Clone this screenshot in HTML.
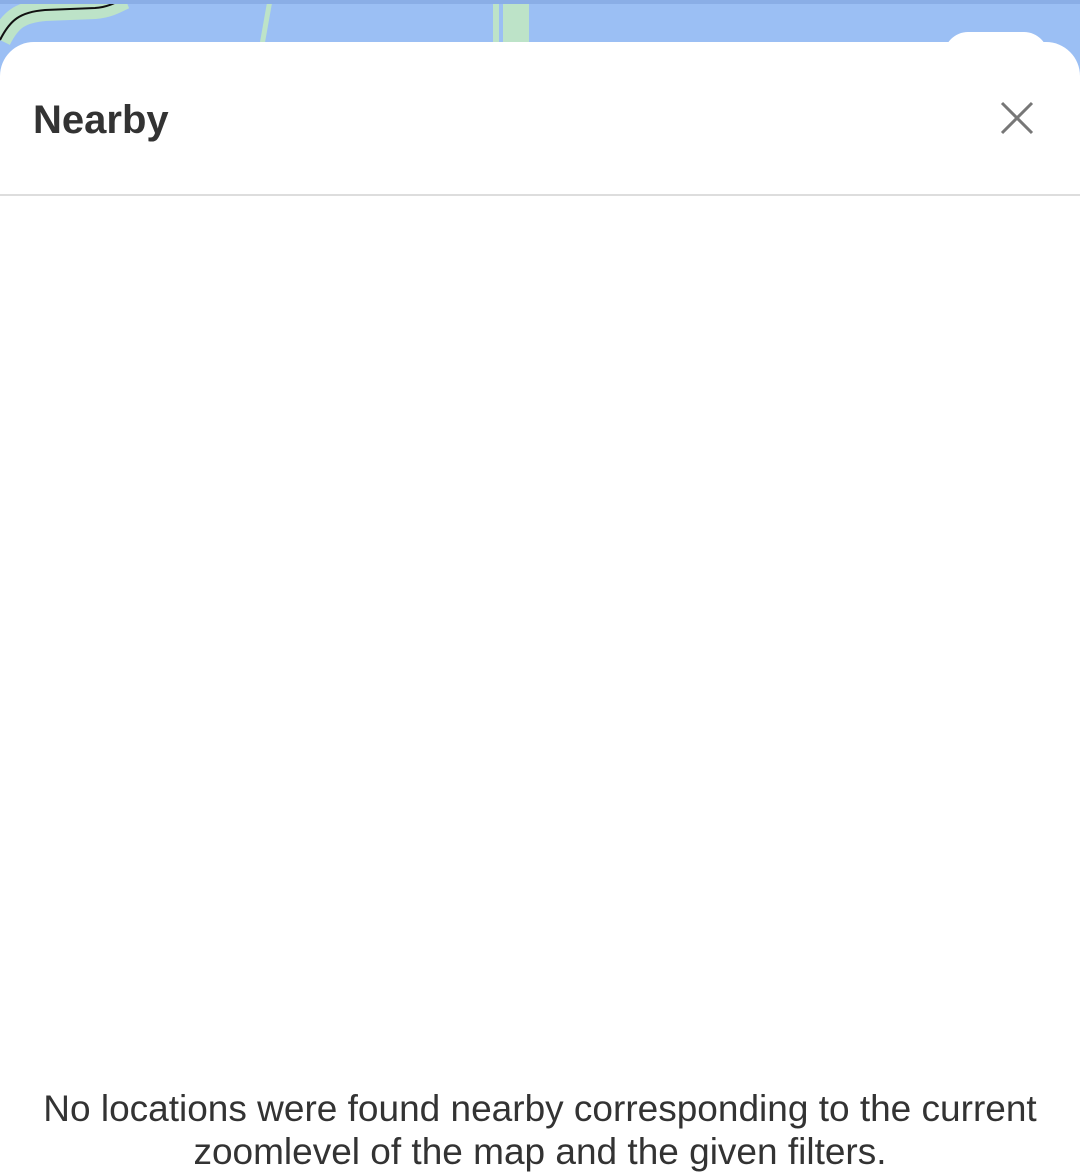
<!DOCTYPE html>
<html><head><style>
body{margin:0;width:1080px;height:1173px;overflow:hidden;background:#9bbff4;font-family:"Liberation Sans",sans-serif;position:relative}
.sheet{position:absolute;left:0;top:42px;width:1080px;height:1131px;background:#fff;border-radius:34px 34px 0 0}
.tab{position:absolute;left:944px;top:32px;width:104px;height:40px;background:#fff;border-radius:24px 24px 0 0}
h1{position:absolute;left:33px;top:98px;margin:0;font-size:40px;font-weight:bold;color:#333}
.line{position:absolute;left:0;top:194px;width:1080px;height:2px;background:#ddd}
.msg{position:absolute;left:0;width:1080px;top:1087px;text-align:center;font-size:37px;line-height:43px;color:#333}
</style></head><body>
<svg width="1080" height="60" style="position:absolute;left:0;top:0">
<path d="M0 40 C10 20,20 12,45 10 L95 8 C110 7,120 0,125 -2" stroke="#bde3c8" stroke-width="22" fill="none"/>
<path d="M0 40 C10 20,20 12,45 10 L95 8 C110 7,120 0,125 -2" stroke="#111" stroke-width="2" fill="none"/>
<path d="M270 0 L262 45" stroke="#bde3c8" stroke-width="5"/>
<rect x="493" y="0" width="36" height="45" fill="#bde3c8"/>
<rect x="499" y="0" width="4" height="45" fill="#9bbff4"/>
<rect x="0" y="0" width="1080" height="4" fill="#8aaee6"/>
</svg>
<div class="tab"></div>
<div class="sheet"></div>
<h1>Nearby</h1>
<svg width="36" height="36" style="position:absolute;left:999px;top:100px"><path d="M3 3L33 33M33 3L3 33" stroke="#777" stroke-width="3"/></svg>
<div class="line"></div>
<div class="msg">No locations were found nearby corresponding to the current<br>zoomlevel of the map and the given filters.</div>
</body></html>
